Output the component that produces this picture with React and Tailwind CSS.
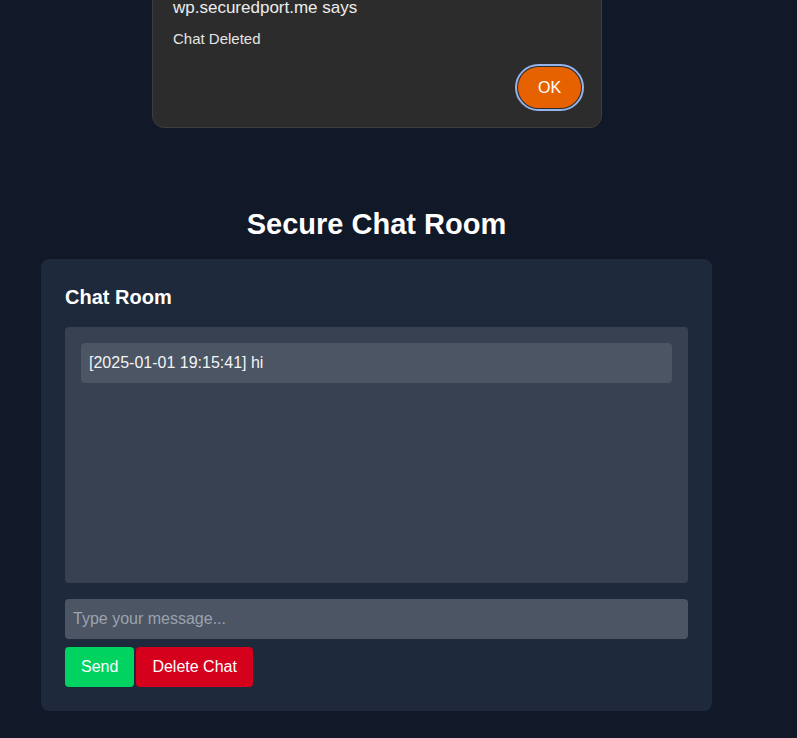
import React from 'react';

const messages = [{ id: 1, time: '2025-01-01 19:15:41', text: 'hi' }];

const AlertBox = () => (
  <div className="absolute left-[152px] top-[-22px] w-[450px] h-[150px] bg-[#2c2c2c] border border-[#3d3d3d] rounded-[12px] px-[20px] pt-[19px]">
    <p className="text-[17px] leading-[20px] text-[#ededed]">wp.securedport.me says</p>
    <p className="mt-[11px] text-[15px] leading-[20px] text-[#e4e4e4]">Chat Deleted</p>
    <div className="flex justify-end mt-[18px]">
      <button className="w-[63px] h-[41px] rounded-full bg-[#e66100] text-white text-[16px] outline-2 outline-[#93b3ea] outline-offset-1">
        OK
      </button>
    </div>
  </div>
);

const App = () => {
  return (
    <div className="relative min-h-screen bg-[#111827] font-['Liberation_Sans',Arial,sans-serif] overflow-hidden">
      <div className="w-[753px] pt-[206px] flex flex-col items-center">
        <h1 className="text-[29px] leading-[36px] font-bold text-white mb-[17px]">Secure Chat Room</h1>
        <div className="w-[671px] bg-[#1e293b] rounded-lg p-6">
          <h2 className="text-xl font-bold text-white mb-4">Chat Room</h2>
          <div className="h-64 bg-[#374151] rounded p-4 mb-4 overflow-y-auto">
            {messages.map((m) => (
              <div key={m.id} className="bg-[#4b5563] rounded p-2 text-[16px] leading-6 text-[#f3f4f6]">
                [{m.time}] {m.text}
              </div>
            ))}
          </div>
          <input
            type="text"
            placeholder="Type your message..."
            className="w-full h-10 px-2 bg-[#4b5563] rounded text-white placeholder-[#9ca3af] outline-none mb-2"
          />
          <div className="flex gap-[2px]">
            <button className="h-10 px-4 bg-[#00d35f] rounded text-white">Send</button>
            <button className="h-10 px-4 bg-[#d4001c] rounded text-white">Delete Chat</button>
          </div>
        </div>
      </div>
      <AlertBox />
    </div>
  );
};

export default App;
